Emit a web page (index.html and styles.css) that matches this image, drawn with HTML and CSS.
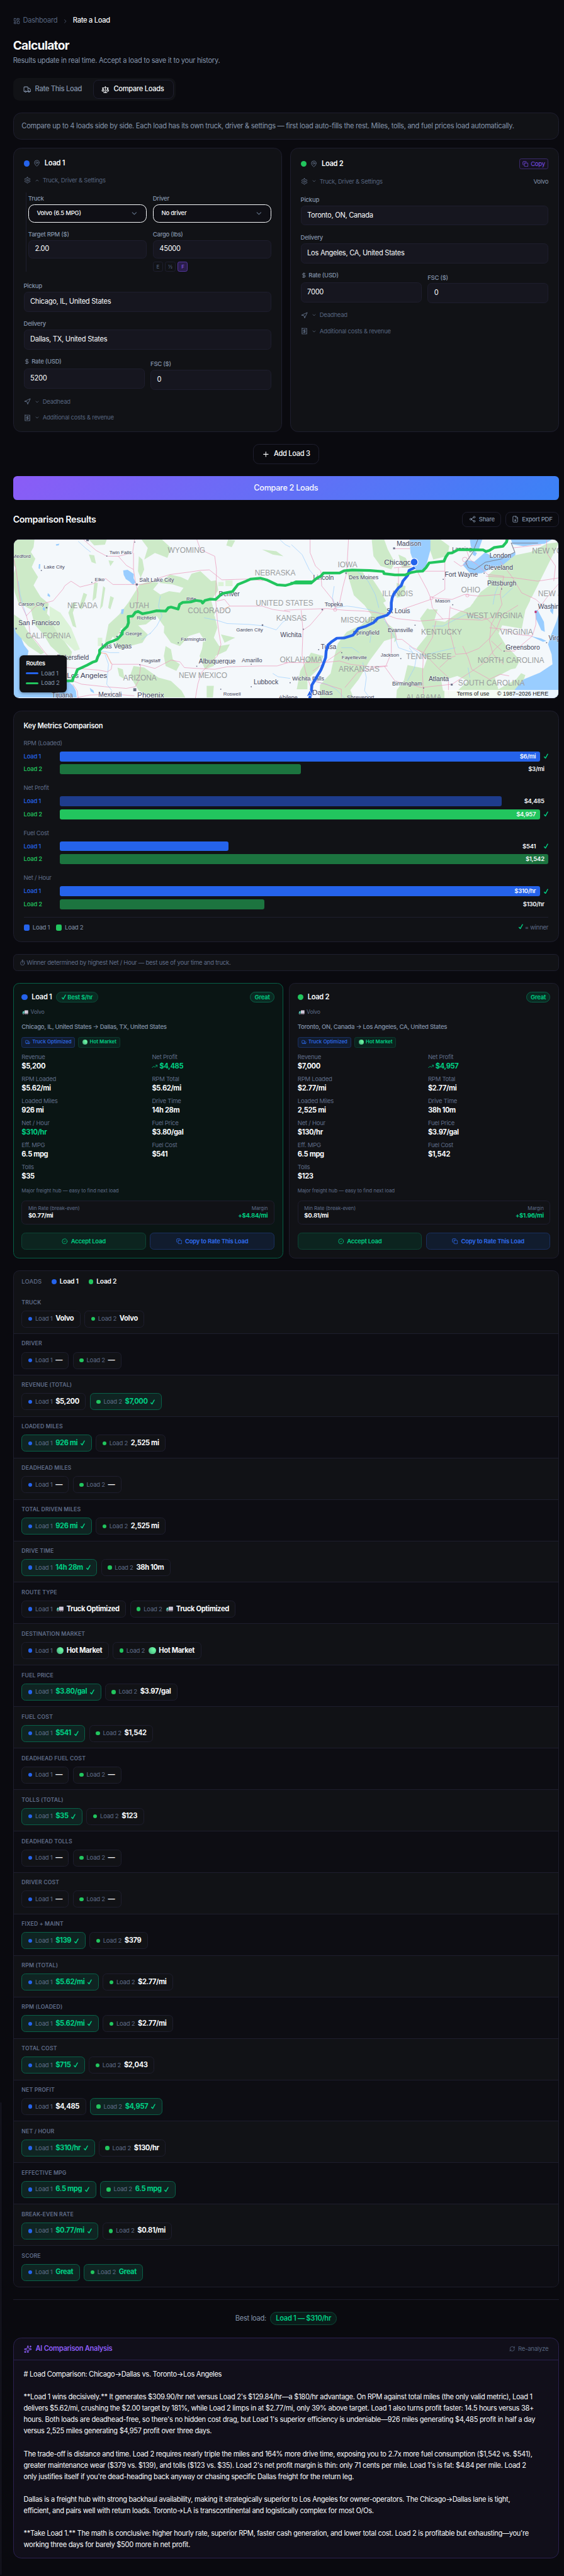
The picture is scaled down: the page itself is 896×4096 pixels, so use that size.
FILE: index.html
```html
<!DOCTYPE html>
<html lang="en">
  <head>
    <meta charset="UTF-8" />
    <meta name="viewport" content="width=device-width, initial-scale=1.0" />
    <title>Rate a Load</title>
    <link rel="stylesheet" href="styles.css">
  </head>
  <body>
    <!-- Icon sprite -->
    <svg class="sprite" viewBox="0 0 24 24">
      <symbol id="i-grid" viewBox="0 0 24 24"><rect x="3" y="3" width="7" height="9" rx="1"/><rect x="14" y="3" width="7" height="5" rx="1"/><rect x="14" y="12" width="7" height="9" rx="1"/><rect x="3" y="16" width="7" height="5" rx="1"/></symbol>
      <symbol id="i-right" viewBox="0 0 24 24"><path d="m9 18 6-6-6-6"/></symbol>
      <symbol id="i-down" viewBox="0 0 24 24"><path d="m6 9 6 6 6-6"/></symbol>
      <symbol id="i-up" viewBox="0 0 24 24"><path d="m18 15-6-6-6 6"/></symbol>
      <symbol id="i-truck" viewBox="0 0 24 24"><path d="M14 18V6a2 2 0 0 0-2-2H4a2 2 0 0 0-2 2v11a1 1 0 0 0 1 1h2"/><path d="M15 18H9"/><path d="M19 18h2a1 1 0 0 0 1-1v-3.65a1 1 0 0 0-.22-.624l-3.48-4.35A1 1 0 0 0 17.520 8H14"/><circle cx="17" cy="18" r="2"/><circle cx="7" cy="18" r="2"/></symbol>
      <symbol id="i-scale" viewBox="0 0 24 24"><path d="m16 16 3-8 3 8c-.87.65-1.920 1-3 1s-2.130-.35-3-1Z"/><path d="m2 16 3-8 3 8c-.87.65-1.920 1-3 1s-2.130-.35-3-1Z"/><path d="M7 21h10"/><path d="M12 3v18"/><path d="M3 7h2c2 0 5-1 7-2 2 1 5 2 7 2h2"/></symbol>
      <symbol id="i-pin" viewBox="0 0 24 24"><path d="M20 10c0 5-5.500 10.200-7.400 11.800a1 1 0 0 1-1.200 0C9.500 20.200 4 15 4 10a8 8 0 0 1 16 0"/><circle cx="12" cy="10" r="3"/></symbol>
      <symbol id="i-gear" viewBox="0 0 24 24"><path d="M12.220 2h-.44a2 2 0 0 0-2 2v.18a2 2 0 0 1-1 1.730l-.43.25a2 2 0 0 1-2 0l-.15-.08a2 2 0 0 0-2.730.73l-.22.38a2 2 0 0 0 .73 2.730l.15.1a2 2 0 0 1 1 1.720v.51a2 2 0 0 1-1 1.740l-.15.09a2 2 0 0 0-.73 2.730l.22.38a2 2 0 0 0 2.730.73l.15-.08a2 2 0 0 1 2 0l.43.25a2 2 0 0 1 1 1.730V20a2 2 0 0 0 2 2h.44a2 2 0 0 0 2-2v-.18a2 2 0 0 1 1-1.730l.43-.25a2 2 0 0 1 2 0l.15.08a2 2 0 0 0 2.730-.73l.22-.39a2 2 0 0 0-.73-2.730l-.15-.08a2 2 0 0 1-1-1.740v-.5a2 2 0 0 1 1-1.740l.15-.09a2 2 0 0 0 .73-2.730l-.22-.38a2 2 0 0 0-2.730-.73l-.15.08a2 2 0 0 1-2 0l-.43-.25a2 2 0 0 1-1-1.730V4a2 2 0 0 0-2-2z"/><circle cx="12" cy="12" r="3"/></symbol>
      <symbol id="i-copy" viewBox="0 0 24 24"><rect x="8" y="8" width="14" height="14" rx="2"/><path d="M4 16c-1.100 0-2-.9-2-2V4c0-1.100.9-2 2-2h10c1.100 0 2 .9 2 2"/></symbol>
      <symbol id="i-dollar" viewBox="0 0 24 24"><path d="M12 2v20"/><path d="M17 5H9.500a3.500 3.500 0 0 0 0 7h5a3.500 3.500 0 0 1 0 7H6"/></symbol>
      <symbol id="i-nav" viewBox="0 0 24 24"><path d="M3 11 22 2l-9 19-2-8-8-2z"/></symbol>
      <symbol id="i-receipt" viewBox="0 0 24 24"><path d="M4 2v20l2-1 2 1 2-1 2 1 2-1 2 1 2-1 2 1V2l-2 1-2-1-2 1-2-1-2 1-2-1-2 1Z"/><path d="M16 8h-6a2 2 0 1 0 0 4h4a2 2 0 1 1 0 4H8"/><path d="M12 17.500v-11"/></symbol>
      <symbol id="i-plus" viewBox="0 0 24 24"><path d="M5 12h14M12 5v14"/></symbol>
      <symbol id="i-share" viewBox="0 0 24 24"><circle cx="18" cy="5" r="3"/><circle cx="6" cy="12" r="3"/><circle cx="18" cy="19" r="3"/><path d="m8.600 13.500 6.800 4M15.400 6.500l-6.800 4"/></symbol>
      <symbol id="i-file" viewBox="0 0 24 24"><path d="M15 2H6a2 2 0 0 0-2 2v16a2 2 0 0 0 2 2h12a2 2 0 0 0 2-2V7Z"/><path d="M14 2v4a2 2 0 0 0 2 2h4M12 18v-6M9 15l3 3 3-3"/></symbol>
      <symbol id="i-watch" viewBox="0 0 24 24"><circle cx="12" cy="14" r="8"/><path d="M10 2h4M12 2v4M12 14V9M19 5l1.500 1.500"/></symbol>
      <symbol id="i-trend" viewBox="0 0 24 24"><path d="M16 7h6v6"/><path d="m22 7-8.500 8.500-5-5L2 17"/></symbol>
      <symbol id="i-ok" viewBox="0 0 24 24"><circle cx="12" cy="12" r="10"/><path d="m9 12 2 2 4-4"/></symbol>
      <symbol id="i-spark" viewBox="0 0 24 24"><path d="M11 2.800a1 1 0 0 1 2 0l1 5.600a2 2 0 0 0 1.600 1.600l5.600 1a1 1 0 0 1 0 2l-5.600 1a2 2 0 0 0-1.600 1.600l-1 5.600a1 1 0 0 1-2 0l-1-5.600A2 2 0 0 0 8.400 14l-5.600-1a1 1 0 0 1 0-2l5.600-1A2 2 0 0 0 10 8.400z"/><path d="M20 2v4M22 4h-4"/><circle cx="4" cy="20" r="2"/></symbol>
      <symbol id="i-refresh" viewBox="0 0 24 24"><path d="M3 12a9 9 0 0 1 9-9 9.750 9.750 0 0 1 6.740 2.740L21 8"/><path d="M21 3v5h-5"/><path d="M21 12a9 9 0 0 1-9 9 9.750 9.750 0 0 1-6.740-2.740L3 16"/><path d="M8 16H3v5"/></symbol>
      <symbol id="i-check" viewBox="0 0 10 12"><path d="M1 7.500 3.500 10.500 8.500 1.500"/></symbol>
      <symbol id="i-lorry" viewBox="0 0 18 14"><path fill="#d9d0e0" stroke="none" d="M7 1h10v9H7z"/><path fill="#b9b0c2" stroke="none" d="M10 1h1v9h-1zM13.500 1h1v9h-1z"/><path fill="#2fa58c" stroke="none" d="M3 3h3.500v7.500H1V7z"/><path fill="#9ad8e8" stroke="none" d="M3.200 4.200h2V7H2.200z"/><path fill="#7b5a70" stroke="none" d="M1 10h16v1.500H1z"/><circle cx="4" cy="11.500" r="1.500" fill="#6e6878" stroke="none"/><circle cx="10" cy="11.500" r="1.500" fill="#6e6878" stroke="none"/><circle cx="14.500" cy="11.500" r="1.500" fill="#6e6878" stroke="none"/></symbol>
    </svg>

    <div class="sidebar-edge"></div>
    <main class="page">
      <nav class="breadcrumb">
        <svg class="icon s14"><use href="#i-grid"/></svg><span>Dashboard</span>
        <svg class="icon s12"><use href="#i-right"/></svg><b>Rate a Load</b>
      </nav>

      <h1>Calculator</h1>
      <p class="subtitle">Results update in real time. Accept a load to save it to your history.</p>

      <div class="tabs">
        <div class="tab"><svg class="icon s16"><use href="#i-truck"/></svg>Rate This Load</div>
        <div class="tab active"><svg class="icon s16"><use href="#i-scale"/></svg>Compare Loads</div>
      </div>

      <div class="info">Compare up to 4 loads side by side. Each load has its own truck, driver &amp; settings — first load auto-fills the rest. Miles, tolls, and fuel prices load automatically.</div>

      <!-- Load forms -->
      <div class="forms">
        <section class="card form">
          <div class="form-head"><i class="dot blue"></i><svg class="icon s14 dim"><use href="#i-pin"/></svg><b>Load 1</b></div>
          <div class="toggle settings"><svg class="icon s14"><use href="#i-gear"/></svg><svg class="icon s10"><use href="#i-up"/></svg>Truck, Driver &amp; Settings</div>
          <div class="panel">
            <div class="pair">
              <div class="field"><label>Truck</label><div class="select">Volvo (6.5 MPG)<svg class="icon s16"><use href="#i-down"/></svg></div></div>
              <div class="field"><label>Driver</label><div class="select">No driver<svg class="icon s16"><use href="#i-down"/></svg></div></div>
            </div>
            <div class="pair">
              <div class="field"><label>Target RPM ($)</label><div class="input small">2.00</div></div>
              <div class="field"><label>Cargo (lbs)</label><div class="input small">45000</div>
                <div class="presets"><span>E</span><span>½</span><span class="on">F</span></div>
              </div>
            </div>
          </div>
          <div class="field first"><label>Pickup</label><div class="input">Chicago, IL, United States</div></div>
          <div class="field"><label>Delivery</label><div class="input">Dallas, TX, United States</div></div>
          <div class="pair rate">
            <div class="field"><label class="with-icon"><svg class="icon s12"><use href="#i-dollar"/></svg>Rate (USD)</label><div class="input">5200</div></div>
            <div class="field fsc"><label>FSC ($)</label><div class="input">0</div></div>
          </div>
          <div class="toggle"><svg class="icon s14"><use href="#i-nav"/></svg><svg class="icon s10"><use href="#i-down"/></svg>Deadhead</div>
          <div class="toggle"><svg class="icon s14"><use href="#i-receipt"/></svg><svg class="icon s10"><use href="#i-down"/></svg>Additional costs &amp; revenue</div>
        </section>

        <section class="card form">
          <div class="form-head tall"><i class="dot green"></i><svg class="icon s14 dim"><use href="#i-pin"/></svg><b>Load 2</b><span class="copy"><svg class="icon s12"><use href="#i-copy"/></svg>Copy</span></div>
          <div class="toggle settings"><svg class="icon s14"><use href="#i-gear"/></svg><svg class="icon s10"><use href="#i-down"/></svg>Truck, Driver &amp; Settings<em>Volvo</em></div>
          <div class="field first"><label>Pickup</label><div class="input">Toronto, ON, Canada</div></div>
          <div class="field"><label>Delivery</label><div class="input">Los Angeles, CA, United States</div></div>
          <div class="pair rate">
            <div class="field"><label class="with-icon"><svg class="icon s12"><use href="#i-dollar"/></svg>Rate (USD)</label><div class="input">7000</div></div>
            <div class="field fsc"><label>FSC ($)</label><div class="input">0</div></div>
          </div>
          <div class="toggle"><svg class="icon s14"><use href="#i-nav"/></svg><svg class="icon s10"><use href="#i-down"/></svg>Deadhead</div>
          <div class="toggle"><svg class="icon s14"><use href="#i-receipt"/></svg><svg class="icon s10"><use href="#i-down"/></svg>Additional costs &amp; revenue</div>
        </section>
      </div>

      <div class="add"><svg class="icon s16"><use href="#i-plus"/></svg>Add Load 3</div>
      <div class="compare">Compare 2 Loads</div>

      <div class="results-head">
        <h2>Comparison Results</h2>
        <div class="ghost"><svg class="icon s14"><use href="#i-share"/></svg>Share</div>
        <div class="ghost"><svg class="icon s14"><use href="#i-file"/></svg>Export PDF</div>
      </div>

      <!-- Route map -->
      <div class="map">
        <svg class="map-canvas" viewBox="0 0 1090 318" preserveAspectRatio="none">
          <rect width="1090" height="318" fill="#f4f8fb"/>
          <g transform="translate(-7 -10) scale(.35714 .33333)">
            <g class="forest">
              <path d="M20 30h115l-5 45 -15 30 25 40 -20 50 35 60 -25 50 40 70 45 40 -10 60 50 60 30 60 20 50 40 60 -10 55 -50 -30 -60 -60 -40 -70 -50 -60 -20 -90 -70 -40 -20 -60 -15 -90 20 -60 -35 -50z"/>
              <path d="M20 480l40 30 30 60 40 60 60 80 -20 10 -70 -50 -80 -90z"/>
              <path d="M735 30h115l50 50 -20 60 -70 -30 -60 40 20 -70zM720 130l20 20 10 60 -20 50 -15 -40zM440 30h100l-10 30 -60 5z"/>
              <path d="M725 300l60-20 50 10 60-50 60 15 40 20 20-40 50-15 60 60 30 -5 10 60 -40 60 20 80 -15 60 -40 40 -50 -10 -60 30 -50 -5 -20 -50 -50 10 -40 -60 -60 50 -70 10 -60 10 -40 20 -30 60 -30 10 20 -110 60 -60 50 -70z"/>
              <path d="M830 290l-30 40 40 30 50 -20 60 10 20 -30 -60 -20z" fill="#f4f8fb"/>
              <path d="M865 500l90 -40 80 20 110 10 15 70 -20 60 30 50 60 -10 -20 40 -60 30 -10 60 -50 20 -30 -80 30 -90 -30 -50 -60 20 -50 60 -50 -20 -40 -60zM650 500l60 40 60 60 -30 50 -70 20 -50 20 -40 -20 40 -80z"/>
              <path d="M870 670l30 20 10 60 40 30 -20 40 -60 -30 -10 -60zM690 790l60 10 80 60 70 20 60 60 20 40h-180l-80 -40 -50 -90zM1100 910h40l-5 70h-35zM1080 640l40 30 -20 70 -30 -10z"/>
              <path d="M470 290l20 0 -10 90 -20 20zM520 310l12 10 -15 110 -15 20zM410 350l20 10 -30 90 -15 -10zM350 410l20 0 -20 60 20 90 -20 -10 -25 -80zM560 370l20 10 -20 70 -12 -10zM590 560l30 10 -30 60 -20 -20zM600 800l30 10 10 60 -30 -20z"/>
              <path d="M440 120l30 5 10 50 -25 -10zM550 155l30 5 -20 30zM1220 30l40 5 -20 40 -30 -10zM1410 90l80 10 40 30 -60 -10zM1180 600l80 20 -60 30z"/>
              <path d="M490 620h25v50h-25zM1205 275h40v35h-40zM1165 285h30v25h-30z" fill="#dcf3d8"/>
              <path d="M220 430l60 40 60 90 50 130 -30 10 -80 -80 -60 -110z" fill="#dcf3d8"/>
            </g>
            <g class="water">
              <path d="M20 555l12 35 30 35 15 40 25 35 -10 50 60 30 100 0 10 90 60 10 30 30 15 30 5 40H20z"/>
              <path d="M632 215l25-3 35 25 -2 25 12 25 -15 15 -20 -20 -20 -15 -12 -25zM622 450l15 -3 -5 30 -12 0zM445 922l20 15 5 18 -20 -12zM160 178l8 0 -2 30 -8 -5zM210 352l12 12 0 12 -14 -8zM255 58l20 -3 -5 10 -14 1zM182 438l12 0 0 20 -12 -5z"/>
            </g>
            <g class="river">
              <path d="M45 280l10 80 20 80 15 50M1085 500l70 15 60 20 120 5 80 8 75 25 35 -45 40 -30M1510 30l30 30 28 15M780 600l40 -50 30 -60 -20 -60 10 -60M510 700l50 10 50 0M735 632l50 -40M530 720l20 60 -5 60 -5 60 30 40M1470 835l30 20 68 10M380 40l40 40 30 25"/>
            </g>
            <g class="road">
              <path d="M20 150l15 80 10 100 15 90 30 68 15 60 5 50 40 50 50 70 90 90 60 70M90 488l50 -55 50 -20 50 -15 55 -70 10 -20 35 -28 50 35 75 -20 30 -20 40 -10 40 35 70 0 40 0 50 0 50 -10 50 -30 60 -20 110 -15 60 -10 50 -3 70 60 150 -5 80 10"/>
              <path d="M410 30l70 65 60 35 65 0 45 55 40 25 10 70 15 70 -5 80 -30 80M605 130l40 -10 40 -10 10 -80M690 110v100M1045 30l20 60 80 40 10 80 -5 180 10 130 10 80 10 60 -20 70 -90 100 -20 70 -30 190M1155 400l45 -10 30 40 180 0 60 20 98 15"/>
              <path d="M315 800l60 5 120 10 50 10 20 -15 5 -30 150 0 90 25 90 -50 50 10 25 35 70 5 100 5 70 -15 180 -5 100 0 60 -20M500 710l35 5 35 65M350 880l50 20 130 15 120 10 50 -10 20 -40 10 -90M350 900l25 40 5 45M375 980l70 -15 140 -5 110 10"/>
            </g>
            <path class="road alt" d="M500 708l40 10 25 60M1180 455l50 -25"/>
          </g>
          <g transform="translate(541 -70) scale(.35714 .33333)">
            <g class="forest">
              <path d="M490 209h70l20 60 40 80 -20 40 -60 -20 -40 -60zM805 209h70l50 40 -10 60 -80 20 -20 -60zM640 300l40 20 30 60 -50 0z"/>
              <path d="M1541 225l-70 10 -90 50 -90 20 -90 60 -60 60 10 60 -50 40 -60 90 -60 30 -80 60 -60 -10 20 -70 -60 0 -40 60 40 100 -60 80 60 60 -20 60 -90 -20 -20 90 -40 60 -10 140 -60 120h520l40 -60 80 -60 90 -40 60 -70 -20 -60 20 -60 -60 -30 30 -60 -80 -90 -40 -70 20 -50 110 20 20 -110z"/>
              <path d="M350 400l90 5 30 60 60 80 50 90 -20 60 60 60 10 60 -60 50 -60 60 -60 80 -80 110 20 50h-190l0 -80 60 -70 20 -100 20 -80 50 -70 80 -40 60 -60 -40 -60 -60 -60z"/>
              <path d="M150 890l70 20 -30 80 -60 60 0 60 -60 0 20 -110z"/>
              <path d="M440 430l50 10 50 80 30 60 -30 20 -60 -50zM630 470l50 20 -10 60 -40 10z"/>
            </g>
            <g class="plain">
              <path d="M560 820l60 -20 -10 60 -80 90 -60 110 -30 105h-40l20 -120 60 -110zM790 560l100 -10 80 10 -60 70 -100 0zM1380 560l70 -20 60 80 -10 60 -70 0 -60 -40zM880 1060l90 -30 60 30 -60 60 -80 0zM1180 1040l90 -50 90 -20 -60 80 -100 60z"/>
              <path d="M980 600l60 -30 20 20 -60 50zM1420 850l60 10 -20 60 -60 40 -60 20 20 -60z"/>
            </g>
            <g class="water">
              <path d="M702 209l5 80 20 60 12 55 50 -12 15 -60 15 -60 0 -60 -15 -63zM1270 209h230l-40 26 -60 5 -60 10 -60 -12zM1040 209h70l-20 60 -30 20 -15 -40z"/>
              <path d="M1000 362l20 -30 45 10 60 -55 60 35 110 -35 0 15 -70 60 -60 20 -60 30 -60 5zM1060 280l20 10 -10 20 -15 -10z"/>
              <path d="M1541 640l-15 60 -30 80 -18 60 20 60 5 60 -70 50 -90 40 -50 60 -25 55h273zM1405 635l15 0 35 70 5 60 -20 -10 -30 -70zM1495 590l15 20 -5 50 -15 -20zM1380 790l60 15 30 15 -20 5z"/>
            </g>
            <g class="river">
              <path d="M40 240l60 60 40 90 30 40M280 490l-10 70 20 60 60 -10 40 5 80 15 60 20 30 40 60 110 20 60 80 30M480 830l10 -80M530 620l-20 -80 -40 -80 -60 -60M440 950l20 90 -10 80 30 45M700 860l40 60 -10 60 -40 80M960 860l-120 30 -60 20 -80 -60M150 1060l90 20 50 30 50 55M320 860l60 0 40 30M1100 690l-80 -30 -60 30 -70 40 -60 0M1030 980l10 60M1170 600l10 -60 20 -60M1220 560l60 -60"/>
            </g>
            <g class="road">
              <path d="M145 209v80l30 80 30 30 5 90 60 80 15 50M360 209l-10 200 -20 80 -20 100 -30 40M0 635l90 -5 150 -5 100 10 110 5 100 15 80 30 130 15 60 -5 90 -10 200 10 60 -20"/>
              <path d="M105 755l-10 -120M105 755l40 -30 80 -100M105 755l-5 150 20 100 30 100M0 950l220 0 90 -10 60 20 110 15 90 -5 30 -80 0 -130 -50 -100M340 1100l70 -90 100 -30 70 -10M170 1060l150 50 0 50M160 1000l160 -120"/>
              <path d="M740 390l60 120 20 50 10 60 60 70M640 380l0 120 -40 60M830 560l110 10 70 -30 80 10 120 -10 20 -110 -90 -10 -60 -60 -40 -30 -20 -60M900 400l-120 0M900 340l0 170 -75 50M660 630l160 -60M850 700l-20 100 -50 90 -60 -30 -60 -50 -30 0 -10 -60M930 610l-10 120 40 170 60 -5 70 -30 60 -60 40 -60 30 -80 90 -60M780 890l-5 130 5 120M780 890l80 90 60 60 0 110M870 980l60 -60 30 -10M560 970l60 90 150 40 170 -20 100 -70 80 -60 60 -80 40 -40"/>
              <path d="M1130 430l160 10 130 20 120 -20M1210 340l70 100 50 90 80 40 60 60M1210 540l10 60 -60 120 -10 100 20 80 60 60M1000 850l30 70 20 70 100 60 60 -30 50 10M1230 880l60 0 100 -90 20 -70 0 -70 60 -90 80 -100M1150 740l90 10 60 30 90 10M930 620l90 30 120 40 60 70M1160 820l60 60M1470 209l0 80 50 80 -10 90M615 380l100 -10M615 265l90 0M1440 240l-160 20M950 340l40 30 40 -20"/>
              <circle cx="825" cy="562" r="9"/><circle cx="1026" cy="546" r="9"/><circle cx="1012" cy="330" r="14"/><circle cx="285" cy="632" r="9"/>
            </g>
            <path class="border" d="M1085 209l-30 80 -38 60 15 30 35 12 60 -45 90 -20 75 -40 -20 -55h150"/>
            <rect class="town" x="610" y="257" width="11" height="11"/><rect class="town" x="933" y="1077" width="11" height="11"/><rect x="1403" y="639" width="11" height="12" fill="#c02a6a"/>
            <g class="town"><rect x="209" y="627" width="8" height="8"/><rect x="342" y="408" width="8" height="8"/><rect x="104" y="746" width="6" height="6"/><rect x="190" y="869" width="6" height="6"/><rect x="319" y="887" width="6" height="6"/><rect x="650" y="923" width="6" height="6"/><rect x="730" y="722" width="6" height="6"/><rect x="888" y="446" width="6" height="6"/><rect x="941" y="599" width="6" height="6"/><rect x="1215" y="504" width="6" height="6"/><rect x="1229" y="878" width="6" height="6"/><rect x="1467" y="827" width="6" height="6"/><rect x="778" y="1100" width="6" height="6"/><rect x="30" y="1068" width="6" height="6"/><rect x="1117" y="409" width="6" height="6"/></g>
          </g>
          <g class="town"><rect x="239" y="298" width="6" height="6"/><rect x="244" y="88" width="4" height="4"/><rect x="145" y="0" width="5" height="3"/><rect x="185" y="32" width="2" height="2"/><rect x="54" y="61" width="2" height="2"/><rect x="155" y="85" width="2" height="2"/><rect x="64" y="135" width="3" height="3"/><rect x="3" y="177" width="3" height="3"/><rect x="251" y="250" width="2" height="2"/><rect x="328" y="206" width="2" height="2"/><rect x="365" y="253" width="2" height="2"/><rect x="496" y="170" width="3" height="3"/><rect x="474" y="249" width="2" height="2"/><rect x="474" y="294" width="2" height="2"/><rect x="413" y="299" width="2" height="2"/><rect x="205" y="193" width="3" height="3"/><rect x="241" y="4" width="2" height="2"/></g>

          <g class="state">
            <text x="308" y="26">WYOMING</text><text x="482" y="72">NEBRASKA</text><text x="107" y="137">NEVADA</text><text x="231" y="138">UTAH</text><text x="348" y="147">COLORADO</text><text x="484" y="133" textLength="115">UNITED STATES</text><text x="525" y="163">KANSAS</text><text x="24" y="198">CALIFORNIA</text><text x="219" y="282">ARIZONA</text><text x="330" y="278" textLength="97">NEW MEXICO</text><text x="532" y="246">OKLAHOMA</text>
            <text x="648" y="55">IOWA</text><text x="737" y="114">ILLINOIS</text><text x="654" y="166">MISSOURI</text><text x="650" y="265">ARKANSAS</text><text x="785" y="239">TENNESSEE</text><text x="815" y="190">KENTUCKY</text><text x="895" y="106">OHIO</text><text x="1037" y="28">NEW YORK</text><text x="1049" y="114">NEW JERSEY</text><text x="906" y="158" textLength="112">WEST VIRGINIA</text><text x="973" y="191">VIRGINIA</text><text x="928" y="247" textLength="133">NORTH CAROLINA</text><text x="889" y="293" textLength="133">SOUTH CAROLINA</text><text x="785" y="322">ALABAMA</text>
          </g>
          <g class="city c10">
            <text x="-3" y="37">Medford</text><text x="191" y="29">Twin Falls</text><text x="60" y="58">Lake City</text><text x="162" y="83">Elko</text><text x="9" y="132">Carson City</text><text x="246" y="160">Richfield</text><text x="211" y="192">St George</text><text x="255" y="246">Flagstaff</text><text x="334" y="203">Farmington</text><text x="345" y="122">Rifle</text><text x="445" y="184">Garden City</text><text x="419" y="313">Roswell</text><text x="656" y="240">Fayetteville</text><text x="734" y="234">Jackson</text><text x="843" y="126">Mason</text>
          </g>
          <g class="city c11">
            <text x="251" y="84">Salt Lake City</text><text x="456" y="246">Amarillo</text><text x="530" y="320">Abilene</text><text x="670" y="79">Des Moines</text><text x="622" y="134">Topeka</text><text x="678" y="190">Springfield</text><text x="748" y="185">Evansville</text><text x="557" y="282">Wichita Falls</text><text x="666" y="320">Shreveport</text><text x="757" y="293">Birmingham</text><text x="877" y="23">Lansing</text>
          </g>
          <g class="city c13">
            <text x="9" y="171">San Francisco</text><text x="175" y="218">Las Vegas</text><text x="86" y="241">Bakersfield</text><text x="76" y="317">Tijuana</text><text x="169" y="315">Mexicali</text><text x="370" y="249">Albuquerque</text><text x="410" y="114">Denver</text><text x="480" y="290">Lubbock</text><text x="533" y="195">Wichita</text><text x="766" y="12">Madison</text><text x="599" y="81">Lincoln</text><text x="746" y="147">St Louis</text><text x="614" y="219">Tulsa</text><text x="830" y="284">Atlanta</text><text x="862" y="74">Fort Wayne</text><text x="952" y="36">London</text><text x="941" y="61">Cleveland</text><text x="947" y="92">Pittsburgh</text><text x="984" y="221">Greensboro</text><text x="1049" y="139">Washington</text><text x="1070" y="202">Virginia Beach</text>
          </g>
          <g class="city c15">
            <text x="106" y="277">Los Angeles</text><text x="247" y="317">Phoenix</text><text x="741" y="50">Chicago</text><text x="597" y="312">Dallas</text>
          </g>

          <!-- Routes -->
          <path class="route r1" transform="translate(541 -70) scale(.35714 .33333)" d="M732 378l-32 17 -8 30 -27 35 -10 28 -15 12 -25 35 -10 25 -5 30v35l-10 25 -15 15 -50 17 -25 28 -40 20 -45 15 -15 20 -15 20 -50 17 -40 1 -30 22 -20 20 -10 35 -3 40 -17 50 -10 25 -25 45 -25 45 -3 35 -10 50"/>
          <path class="route r2" transform="translate(-7 -10) scale(.35714 .33333)" d="M300 880h48l4 -18 14 -22 10 -28 24 -12 30 -15 30 -17 22 -8 8 -25 10 -20v-20l20 -20 25 -23 30 -12 25 -12 25 -28 3 -20 27 -28 7 -22 -2 -38 25 -2 15 -22 15 -6 25 14 40 -8 40 -10 50 2 15 -20 15 -4 40 12 8 -28 17 -12 45 -3 30 -9 30 4 7 12 13 -16 30 -8 30 2 35 -35 60 -13 30 -42 45 -20 25 -12 55 -6 35 10 60 30 45 4 35 -10 25 -12h90"/>
          <path class="route r2" transform="translate(541 -70) scale(.35714 .33333)" d="M35 472h115l15 -14 20 -18 20 -10 15 -19h90l25 -13 45 -5 100 3 75 6 5 13 60 7h60l30 -14 30 -6 35 -2 20 -22 17 -28 83 -10 10 -25 15 -23 20 -2 35 -20 140 2 15 10 20 -7 25 -17 50 -8 20 -25 5 -20"/>
          <circle cx="801" cy="45" r="7.500" fill="#2563eb" stroke="#fff" stroke-width="1.500"/>
          <path d="M592 302l6.500 13 -6.500 -3 -6.500 3z" fill="#2563eb" stroke="#fff" stroke-width="1"/>
        </svg>
        <div class="map-legend"><b>Routes</b><span><i class="bg-blue"></i>Load 1</span><span><i class="bg-green"></i>Load 2</span></div>
        <div class="map-terms"><span>Terms of use</span><span>© 1987–2026 HERE</span></div>
      </div>

      <!-- Bars -->
      <section class="card metrics">
        <h3>Key Metrics Comparison</h3>
        <div id="bars"></div>
        <div class="bars-legend"><i class="bg-blue"></i>Load 1<i class="bg-green"></i>Load 2<span><svg class="icon check"><use href="#i-check"/></svg> = winner</span></div>
      </section>

      <div class="notice"><svg class="icon s12"><use href="#i-watch"/></svg>Winner determined by highest Net / Hour — best use of your time and truck.</div>

      <div class="results" id="results"></div>

      <div class="table">
        <div class="table-head"><span>LOADS</span><i class="dot ten blue"></i><b>Load 1</b><i class="dot ten green"></i><b>Load 2</b></div>
        <div id="rows"></div>
      </div>

      <div class="best"><span>Best load:</span><b>Load 1 — $310/hr</b></div>

      <section class="ai">
        <header><svg class="icon s16"><use href="#i-spark"/></svg><b>AI Comparison Analysis</b><span><svg class="icon s12"><use href="#i-refresh"/></svg>Re-analyze</span></header>
        <div class="ai-text"># Load Comparison: Chicago→Dallas vs. Toronto→Los Angeles

**Load 1 wins decisively.** It generates $309.90/hr net versus Load 2's $129.84/hr—a $180/hr advantage. On RPM against total miles (the only valid metric), Load 1
delivers $5.62/mi, crushing the $2.00 target by 181%, while Load 2 limps in at $2.77/mi, only 39% above target. Load 1 also turns profit faster: 14.5 hours versus 38+
hours. Both loads are deadhead-free, so there's no hidden cost drag, but Load 1's superior efficiency is undeniable—926 miles generating $4,485 profit in half a day
versus 2,525 miles generating $4,957 profit over three days.

The trade-off is distance and time. Load 2 requires nearly triple the miles and 164% more drive time, exposing you to 2.7x more fuel consumption ($1,542 vs. $541),
greater maintenance wear ($379 vs. $139), and tolls ($123 vs. $35). Load 2's net profit margin is thin: only 71 cents per mile. Load 1's is fat: $4.84 per mile. Load 2
only justifies itself if you're dead-heading back anyway or chasing specific Dallas freight for the return leg.

Dallas is a freight hub with strong backhaul availability, making it strategically superior to Los Angeles for owner-operators. The Chicago→Dallas lane is tight,
efficient, and pairs well with return loads. Toronto→LA is transcontinental and logistically complex for most O/Os.

**Take Load 1.** The math is conclusive: higher hourly rate, superior RPM, faster cash generation, and lower total cost. Load 2 is profitable but exhausting—you're
working three days for barely $500 more in net profit.</div>
      </section>
    </main>

    <script>
      const icon = (name, cls) => `<svg class="icon ${cls}"><use href="#i-${name}"/></svg>`;
      const check = icon("check", "check");

      // label, [value, width %, winner] for each load
      const bars = [
        ["RPM (Loaded)", ["$6/mi", 100, true], ["$3/mi", 49.3, false]],
        ["Net Profit", ["$4,485", 90.5, false], ["$4,957", 100, true]],
        ["Fuel Cost", ["$541", 35.1, true], ["$1,542", 100, false]],
        ["Net / Hour", ["$310/hr", 100, true], ["$130/hr", 41.9, false]],
      ];
      document.getElementById("bars").innerHTML = bars
        .map(([label, ...loads]) => `<div class="bar-group"><p>${label}</p>${loads
          .map(([value, width, win], i) => `<div class="bar-row ${i ? "green" : "blue"}"><span>Load ${i + 1}</span><div class="track"><div class="bar ${win ? "win" : ""}" style="width:${width}%"></div><b>${value}</b></div>${win ? check : ""}</div>`)
          .join("")}</div>`)
        .join("");

      const labels = ["Revenue", "Net Profit", "RPM Loaded", "RPM Total", "Loaded Miles", "Drive Time", "Net / Hour", "Fuel Price", "Eff. MPG", "Fuel Cost", "Tolls"];
      const cards = [
        { route: "Chicago, IL, United States → Dallas, TX, United States", rate: "$0.77/mi", margin: "+$4.84/mi", best: true,
          values: ["$5,200", "$4,485", "$5.62/mi", "$5.62/mi", "926 mi", "14h 28m", "$310/hr", "$3.80/gal", "6.5 mpg", "$541", "$35"] },
        { route: "Toronto, ON, Canada → Los Angeles, CA, United States", rate: "$0.81/mi", margin: "+$1.96/mi", best: false,
          values: ["$7,000", "$4,957", "$2.77/mi", "$2.77/mi", "2,525 mi", "38h 10m", "$130/hr", "$3.97/gal", "6.5 mpg", "$1,542", "$123"] },
      ];
      document.getElementById("results").innerHTML = cards
        .map((c, n) => `<section class="result ${c.best ? "is-best" : ""}">
          <div class="result-head"><i class="dot ${n ? "green" : "blue"}"></i><b>Load ${n + 1}</b>${c.best ? `<span class="badge soft">${check}Best $/hr</span>` : ""}<span class="badge score">Great</span></div>
          <div class="vehicle">${icon("lorry", "lorry")}Volvo</div>
          <div class="route-name">${c.route}</div>
          <div class="chips"><span class="chip blue">${icon("truck", "s10")}Truck Optimized</span><span class="chip green"><i class="ball small"></i>Hot Market</span></div>
          <div class="stats">${labels.map((l, i) => `<div><span>${l}</span><b class="${i == 1 || (i == 6 && c.best) ? "up" : ""}">${i == 1 ? icon("trend", "s12") : ""}${c.values[i]}</b></div>`).join("")}</div>
          <div class="note">Major freight hub — easy to find next load</div>
          <div class="margin"><div><span>Min Rate (break-even)</span><b>${c.rate}</b></div><div><span>Margin</span><b class="up">${c.margin}</b></div></div>
          <div class="actions"><div class="accept">${icon("ok", "s12")}Accept Load</div><div class="to-rate">${icon("copy", "s12")}Copy to Rate This Load</div></div>
        </section>`)
        .join("");

      // label, load 1, load 2, winners
      const lorry = icon("lorry", "lorry big") + "Truck Optimized";
      const hot = '<i class="ball"></i>Hot Market';
      const rows = [
        ["Truck", "Volvo", "Volvo", ""], ["Driver", "—", "—", ""], ["Revenue (total)", "$5,200", "$7,000", "2"],
        ["Loaded miles", "926 mi", "2,525 mi", "1"], ["Deadhead miles", "—", "—", ""], ["Total driven miles", "926 mi", "2,525 mi", "1"],
        ["Drive time", "14h 28m", "38h 10m", "1"], ["Route type", lorry, lorry, ""], ["Destination market", hot, hot, ""],
        ["Fuel price", "$3.80/gal", "$3.97/gal", "1"], ["Fuel cost", "$541", "$1,542", "1"], ["Deadhead fuel cost", "—", "—", ""],
        ["Tolls (total)", "$35", "$123", "1"], ["Deadhead tolls", "—", "—", ""], ["Driver cost", "—", "—", ""],
        ["Fixed + maint", "$139", "$379", "1"], ["RPM (total)", "$5.62/mi", "$2.77/mi", "1"], ["RPM (loaded)", "$5.62/mi", "$2.77/mi", "1"],
        ["Total cost", "$715", "$2,043", "1"], ["Net profit", "$4,485", "$4,957", "2"], ["Net / hour", "$310/hr", "$130/hr", "1"],
        ["Effective MPG", "6.5 mpg", "6.5 mpg", "12"], ["Break-even rate", "$0.77/mi", "$0.81/mi", "1"], ["Score", "Great", "Great", "score"],
      ];
      const pill = (n, value, wins) => {
        const win = wins == "score" || wins.includes(n);
        return `<div class="pill ${win ? "win" : ""}"><i class="dot eight ${n == 1 ? "blue" : "green"}"></i><span>Load ${n}</span><b>${value}</b>${win && wins != "score" ? check : ""}</div>`;
      };
      document.getElementById("rows").innerHTML = rows
        .map(([label, a, b, wins]) => `<div class="row"><p>${label}</p><div class="pills">${pill(1, a, wins)}${pill(2, b, wins)}</div></div>`)
        .join("");
    </script>
  </body>
</html>
```
FILE: styles.css
```css
* {
  box-sizing: border-box;
  margin: 0;
  padding: 0;
  letter-spacing: -0.026em;
}
html {
  background: #0a0a0f;
  overflow: hidden;
}
body {
  position: relative;
  zoom: 0.79433;
  width: 1128px;
  height: 5154px;
  background: #0a0a0f;
  color: #f8fafc;
  font-family: Inter, "Liberation Sans", sans-serif;
  font-size: 14px;
  line-height: 20px;
  overflow: hidden;
}
b, h1, h2, h3 {
  font-weight: 600;
}
i, em {
  font-style: normal;
}
.sprite {
  display: none;
}
.sidebar-edge {
  position: absolute;
  left: 0;
  top: 4209px;
  bottom: 0;
  width: 2px;
  border-right: 1px solid #1e1e2e;
}
.page {
  display: flex;
  flex-direction: column;
  padding: 32px 10px 0 26px;
}

/* Icons and dots */
.icon {
  flex: none;
  fill: none;
  stroke: currentColor;
  stroke-width: 2;
  stroke-linecap: round;
  stroke-linejoin: round;
}
.s10 { width: 10px; height: 10px; }
.s12 { width: 12px; height: 12px; }
.s14 { width: 14px; height: 14px; }
.s16 { width: 16px; height: 16px; }
.check { width: 9px; height: 11px; color: #00d084; }
.lorry { width: 13px; height: 10px; }
.lorry.big { width: 16px; height: 12px; margin: 0 5px 0 1px; }
.ball {
  flex: none;
  width: 14px;
  height: 14px;
  margin: 0 6px 0 2px;
  border-radius: 50%;
  background: radial-gradient(circle at 70% 35%, #6dfba5, #58d492 50%, #3f8f74);
}
.ball.small { width: 10px; height: 10px; margin: 0 0 0 2px; }
.dim { color: #64748b; }
.dot {
  flex: none;
  width: 12px;
  height: 12px;
  border-radius: 50%;
}
.dot.ten { width: 10px; height: 10px; }
.dot.eight { width: 8px; height: 8px; }
.dot.blue, .bg-blue { background: #2563eb; }
.dot.green, .bg-green { background: #22c55e; }

/* Header */
.breadcrumb {
  display: flex;
  align-items: center;
  gap: 6px;
  height: 20px;
  color: #56647e;
}
.breadcrumb .s12 { margin: 0 3px 0 4px; }
.breadcrumb b { color: #f8fafc; font-weight: 500; }
h1 {
  margin-top: 24px;
  font-size: 24px;
  line-height: 32px;
  font-weight: 700;
  letter-spacing: -0.035em;
}
.subtitle {
  height: 20px;
  margin-top: 4px;
  color: #8494ab;
}
.tabs {
  display: flex;
  align-self: flex-start;
  width: 325px;
  height: 46px;
  margin-top: 24px;
  padding: 4px;
  border-radius: 12px;
  background: #111216;
}
.tab {
  display: flex;
  align-items: center;
  gap: 8px;
  padding-left: 16px;
  width: 156px;
  color: #8494ab;
  font-weight: 500;
}
.tab.active {
  width: 161px;
  border: 1px solid #1e1e2e;
  border-radius: 10px;
  background: #0e0e14;
  color: #f8fafc;
}
.info {
  display: flex;
  align-items: center;
  height: 54px;
  margin-top: 24px;
  padding: 0 16px;
  border: 1px solid #1e1e2e;
  border-radius: 16px;
  background: #111216;
  color: #8494ab;
  white-space: nowrap;
}

/* Forms */
.card {
  border: 1px solid #1e1e2e;
  border-radius: 16px;
  background: #111216;
}
.forms {
  display: grid;
  grid-template-columns: 1fr 1fr;
  gap: 16px;
  height: 569px;
  margin-top: 16px;
}
.form { padding: 20px; }
.form-head {
  display: flex;
  align-items: center;
  gap: 8px;
  height: 20px;
}
.form-head.tall { height: 22px; }
.copy {
  display: flex;
  align-items: center;
  justify-content: center;
  gap: 4px;
  width: 58px;
  height: 22px;
  margin-left: auto;
  border: 1px solid #3a2a6b;
  border-radius: 4px;
  background: #15121f;
  color: #7c4ff0;
  font-size: 12px;
}
.toggle {
  display: flex;
  align-items: center;
  height: 16px;
  margin-top: 16px;
  color: #56647e;
  font-size: 12px;
}
.toggle .s14 { margin-right: 8px; color: #64748b; }
.toggle .s10 { margin-right: 6px; color: #64748b; }
.toggle em { margin-left: auto; color: #8494ab; }
.panel {
  height: 159px;
  margin: 16px 0 0 4px;
  padding: 4px 0 0 4px;
  border-left: 2px solid #1e1e2e;
}
.pair {
  display: grid;
  grid-template-columns: 1fr 1fr;
  gap: 12px;
}
.field { margin-top: 16px; }
.field.first { margin-top: 20px; }
.pair .field { margin-top: 0; }
.panel .pair + .pair { margin-top: 16px; }
.field label {
  display: block;
  height: 18px;
  margin-bottom: 2px;
  line-height: 18px;
  color: #8494ab;
  font-size: 12px;
  font-weight: 500;
}
.field label.with-icon {
  display: flex;
  align-items: center;
  gap: 4px;
  height: 16px;
  margin-bottom: 6px;
}
.rate { margin-top: 16px; }
.fsc { padding-top: 4px; }
.input, .select {
  display: flex;
  align-items: center;
  height: 40px;
  padding: 0 12px;
  border: 1px solid #1e1e2e;
  border-radius: 8px;
  background: #16161f;
}
.input.small { height: 36px; }
.select {
  justify-content: space-between;
  height: 36px;
  padding: 0 16px;
  border-color: #f8fafc;
  border-radius: 12px;
  background: #0f0f15;
  font-size: 12px;
  font-weight: 500;
}
.select .icon { color: #64748b; }
.presets {
  display: flex;
  gap: 4px;
  margin-top: 6px;
}
.presets span {
  width: 20px;
  height: 21px;
  border: 1px solid #1e1e2e;
  border-radius: 4px;
  color: #56647e;
  font-size: 10px;
  line-height: 19px;
  text-align: center;
}
.presets span:nth-child(2) { width: 22px; }
.presets .on {
  border-color: #53369c;
  background: #2a1d4a;
  color: #8b5cf6;
}
.add {
  display: flex;
  align-items: center;
  align-self: center;
  justify-content: center;
  gap: 8px;
  width: 133px;
  height: 40px;
  margin-top: 24px;
  border: 1px solid #1e1e2e;
  border-radius: 12px;
  font-weight: 500;
}
.compare {
  height: 48px;
  margin-top: 24px;
  border-radius: 8px;
  background: linear-gradient(135deg, #8b5cf6, #3b82f6);
  font-size: 16px;
  font-weight: 500;
  line-height: 48px;
  text-align: center;
}

/* Map */
.results-head {
  display: flex;
  align-items: center;
  gap: 8px;
  height: 30px;
  margin-top: 24px;
}
.results-head h2 { flex: 1; font-size: 18px; }
.ghost {
  display: flex;
  align-items: center;
  gap: 6px;
  height: 30px;
  padding: 0 12px;
  border: 1px solid #1e1e2e;
  border-radius: 10px;
  color: #8494ab;
  font-size: 12px;
  font-weight: 500;
}
.map {
  position: relative;
  height: 320px;
  margin-top: 24px;
  border: 1px solid #1e1e2e;
  border-radius: 12px;
  overflow: hidden;
}
.map-canvas {
  display: block;
  width: 100%;
  height: 100%;
  font-family: "Liberation Sans", Arial, sans-serif;
}
.map-canvas text { letter-spacing: 0; }
.forest { fill: #cdeac8; }
.plain { fill: #f4f8fb; }
.water { fill: #99cdff; }
.river { fill: none; stroke: #99cdff; stroke-width: 2.500; }
.road { fill: none; stroke: #ec9dbd; stroke-width: 2.800; }
.road.alt { stroke: #fbb491; }
.border { fill: none; stroke: #7f8799; stroke-width: 4; }
.town { fill: #6a7088; }
.state { fill: #9a9d9e; font-size: 15px; }
.city {
  fill: #44465c;
  stroke: #f4f8fb;
  stroke-width: 1.500;
  stroke-opacity: 0.700;
  paint-order: stroke;
}
.c10 { font-size: 10px; }
.c11 { font-size: 11.300px; }
.c13 { font-size: 13px; }
.c15 { font-size: 14.800px; }
.route {
  fill: none;
  stroke-width: 16;
  stroke-linejoin: round;
}
.r1 { stroke: #2563eb; }
.r2 { stroke: #22c55e; }
.map-legend {
  position: absolute;
  left: 12px;
  bottom: 12px;
  width: 94px;
  height: 74px;
  padding: 8px 13px;
  border-radius: 8px;
  background: #111216;
  box-shadow: 0 2px 6px rgba(0, 0, 0, 0.300);
  font-size: 12px;
}
.map-legend b { display: block; line-height: 18px; }
.map-legend span {
  display: flex;
  align-items: center;
  gap: 6px;
  color: #8494ab;
  white-space: nowrap;
}
.map-legend i { width: 24px; height: 4px; border-radius: 2px; }
.map-terms {
  position: absolute;
  right: 0;
  bottom: 0;
  display: flex;
  gap: 16px;
  width: 228px;
  height: 16px;
  padding-left: 25px;
  background: rgba(255, 255, 255, 0.800);
  color: #111;
  font: 11.300px/16px "Liberation Sans", Arial, sans-serif;
}
.map-terms span { letter-spacing: 0; white-space: nowrap; }

/* Bars */
.metrics {
  height: 463px;
  margin-top: 24px;
  padding: 20px;
}
h3 { height: 20px; font-size: 14px; }
.bar-group { margin-top: 16px; }
.bar-group + .bar-group { margin-top: 20px; }
.bar-group p {
  height: 16px;
  line-height: 16px;
  margin-bottom: 8px;
  color: #5f6c88;
  font-size: 12px;
}
.bar-row {
  display: flex;
  align-items: center;
  gap: 8px;
  height: 20px;
  margin-top: 6px;
  font-size: 12px;
}
.bar-row span { width: 64px; font-weight: 500; }
.bar-row.blue span { color: #2563eb; }
.bar-row.green span { color: #22c55e; }
.track {
  position: relative;
  flex: 1;
  height: 20px;
}
.bar { height: 20px; border-radius: 4px; }
.blue .bar { background: #1e3c8c; }
.green .bar { background: #1c743f; }
.blue .bar.win { background: #2563eb; }
.green .bar.win { background: #22c55e; }
.track b { position: absolute; right: 8px; top: 0; }
.bars-legend {
  display: flex;
  align-items: center;
  height: 29px;
  margin-top: 16px;
  padding-top: 12px;
  border-top: 1px solid #1e1e2e;
  color: #8494ab;
  font-size: 12px;
}
.bars-legend i {
  width: 12px;
  height: 12px;
  margin-right: 6px;
  border-radius: 3px;
}
.bars-legend .bg-green { margin-left: 12px; }
.bars-legend span { margin-left: auto; color: #5f6c88; }
.notice {
  display: flex;
  align-items: center;
  gap: 2px;
  height: 34px;
  margin-top: 24px;
  padding: 0 12px;
  border: 1px solid #1e1e2e;
  border-radius: 8px;
  background: #111216;
  color: #5f6c88;
  font-size: 12px;
}

/* Result cards */
.results {
  display: grid;
  grid-template-columns: 1fr 1fr;
  gap: 12px;
  height: 551px;
  margin-top: 24px;
}
.result {
  padding: 16px;
  border: 1px solid #1e1e2e;
  border-radius: 12px;
  background: #111216;
}
.result.is-best {
  border-color: #065f46;
  background: #0a1514;
}
.result-head {
  display: flex;
  align-items: center;
  gap: 8px;
  height: 22px;
}
.badge {
  display: flex;
  align-items: center;
  gap: 3px;
  height: 22px;
  padding: 0 10px;
  border: 1px solid #0b4a38;
  border-radius: 11px;
  background: #0a2a22;
  color: #00d084;
  font-size: 12px;
  font-weight: 600;
}
.badge.score { margin-left: auto; padding: 0 8px; border-color: #086148; }
.vehicle {
  display: flex;
  align-items: center;
  gap: 4px;
  height: 16px;
  margin: 12px 0 0 1px;
  color: #5f6c88;
  font-size: 11px;
}
.route-name {
  height: 18px;
  line-height: 18px;
  margin-top: 12px;
  color: #8494ab;
  font-size: 12px;
  font-weight: 500;
}
.chips { display: flex; gap: 6px; height: 21px; margin-top: 11px; }
.chip {
  display: flex;
  align-items: center;
  gap: 4px;
  padding: 0 6px;
  border: 1px solid #0c3a2f;
  border-radius: 4px;
  background: #0b221e;
  color: #00d084;
  font-size: 10px;
  font-weight: 600;
  letter-spacing: 0;
}
.chip.blue { border-color: #1a3060; background: #111c30; color: #2f6df0; font-weight: 500; }
.stats {
  display: grid;
  grid-template-columns: 1fr 1fr;
  column-gap: 16px;
  row-gap: 8px;
  margin-top: 12px;
}
.stats span {
  display: block;
  height: 16px;
  line-height: 16px;
  color: #5f6c88;
  font-size: 12px;
}
.stats b {
  display: flex;
  align-items: center;
  gap: 3px;
  height: 20px;
  font-weight: 700;
  letter-spacing: -0.032em;
}
.up { color: #00d084; }
.note {
  height: 14px;
  margin-top: 12px;
  line-height: 14px;
  color: #5f6c88;
  font-size: 10px;
  letter-spacing: -0.010em;
}
.margin {
  display: flex;
  justify-content: space-between;
  height: 48px;
  margin-top: 12px;
  padding: 8px 12px;
  border: 1px solid #1e1e2e;
  border-radius: 8px;
  background: #111216;
}
.margin div:last-child { text-align: right; }
.margin span {
  display: block;
  height: 14px;
  line-height: 14px;
  color: #5f6c88;
  font-size: 10px;
  letter-spacing: -0.010em;
}
.margin b {
  display: block;
  line-height: 16px;
  font-size: 12px;
  font-weight: 700;
}
.actions {
  display: grid;
  grid-template-columns: 1fr 1fr;
  gap: 8px;
  margin-top: 17px;
}
.actions div {
  display: flex;
  align-items: center;
  justify-content: center;
  gap: 6px;
  height: 34px;
  border: 1px solid #0c4434;
  border-radius: 8px;
  background: #0c241f;
  color: #00d084;
  font-size: 12px;
  font-weight: 600;
}
.actions .to-rate {
  border-color: #1a3060;
  background: #111c2e;
  color: #2f6df0;
}

/* Comparison table */
.table {
  height: 2036px;
  margin-top: 24px;
  border: 1px solid #1e1e2e;
  border-radius: 12px;
  background: #111216;
  overflow: hidden;
}
.table-head {
  display: flex;
  align-items: center;
  height: 43px;
  padding: 0 16px;
  color: #5f6c88;
  font-size: 12px;
  font-weight: 500;
}
.table-head span { letter-spacing: 0; }
.table-head b { font-size: 13px; color: #f8fafc; }
.table-head .dot { margin: 0 6px 0 20px; }
.row {
  height: 83px;
  padding: 12px 16px;
  border-bottom: 1px solid #1e1e2e;
}
.row:nth-child(even) { background: #0d0d13; }
.row:last-child { border-bottom: 0; }
.row p {
  height: 16px;
  line-height: 16px;
  color: #5f6c88;
  font-size: 11px;
  font-weight: 600;
  letter-spacing: 0.015em;
  text-transform: uppercase;
}
.pills { display: flex; gap: 8px; margin-top: 8px; }
.pill {
  display: flex;
  align-items: center;
  gap: 6px;
  height: 34px;
  padding: 0 12px;
  border: 1px solid #1e1e2e;
  border-radius: 8px;
  background: #111216;
}
.pill span { color: #5f6c88; font-size: 12px; }
.pill b {
  display: flex;
  align-items: center;
  font-weight: 700;
  letter-spacing: -0.032em;
}
.pill.win {
  border-color: #086148;
  background: #0f2422;
}
.pill.win b { color: #00d084; }

/* Summary */
.best {
  display: flex;
  align-items: center;
  justify-content: center;
  gap: 8px;
  height: 51px;
  margin-top: 24px;
  padding-top: 24px;
  border-top: 1px solid #1e1e2e;
  color: #8494ab;
}
.best b {
  height: 26px;
  padding: 0 10px;
  border: 1px solid #0b4a38;
  border-radius: 13px;
  background: #0a1c1a;
  color: #00d084;
  line-height: 24px;
}
.ai {
  height: 442px;
  margin-top: 25px;
  border: 1px solid #2b2150;
  border-radius: 16px;
  background: #110f1a;
}
.ai header {
  display: flex;
  align-items: center;
  gap: 8px;
  height: 45px;
  padding: 0 20px;
  border-bottom: 1px solid #2b2150;
  color: #8b5cf6;
}
.ai header span {
  display: flex;
  align-items: center;
  gap: 6px;
  margin-left: auto;
  color: #56647e;
  font-size: 12px;
}
.ai-text {
  padding: 16px 20px;
  line-height: 22.750px;
  letter-spacing: -0.028em;
  white-space: pre;
}
```
